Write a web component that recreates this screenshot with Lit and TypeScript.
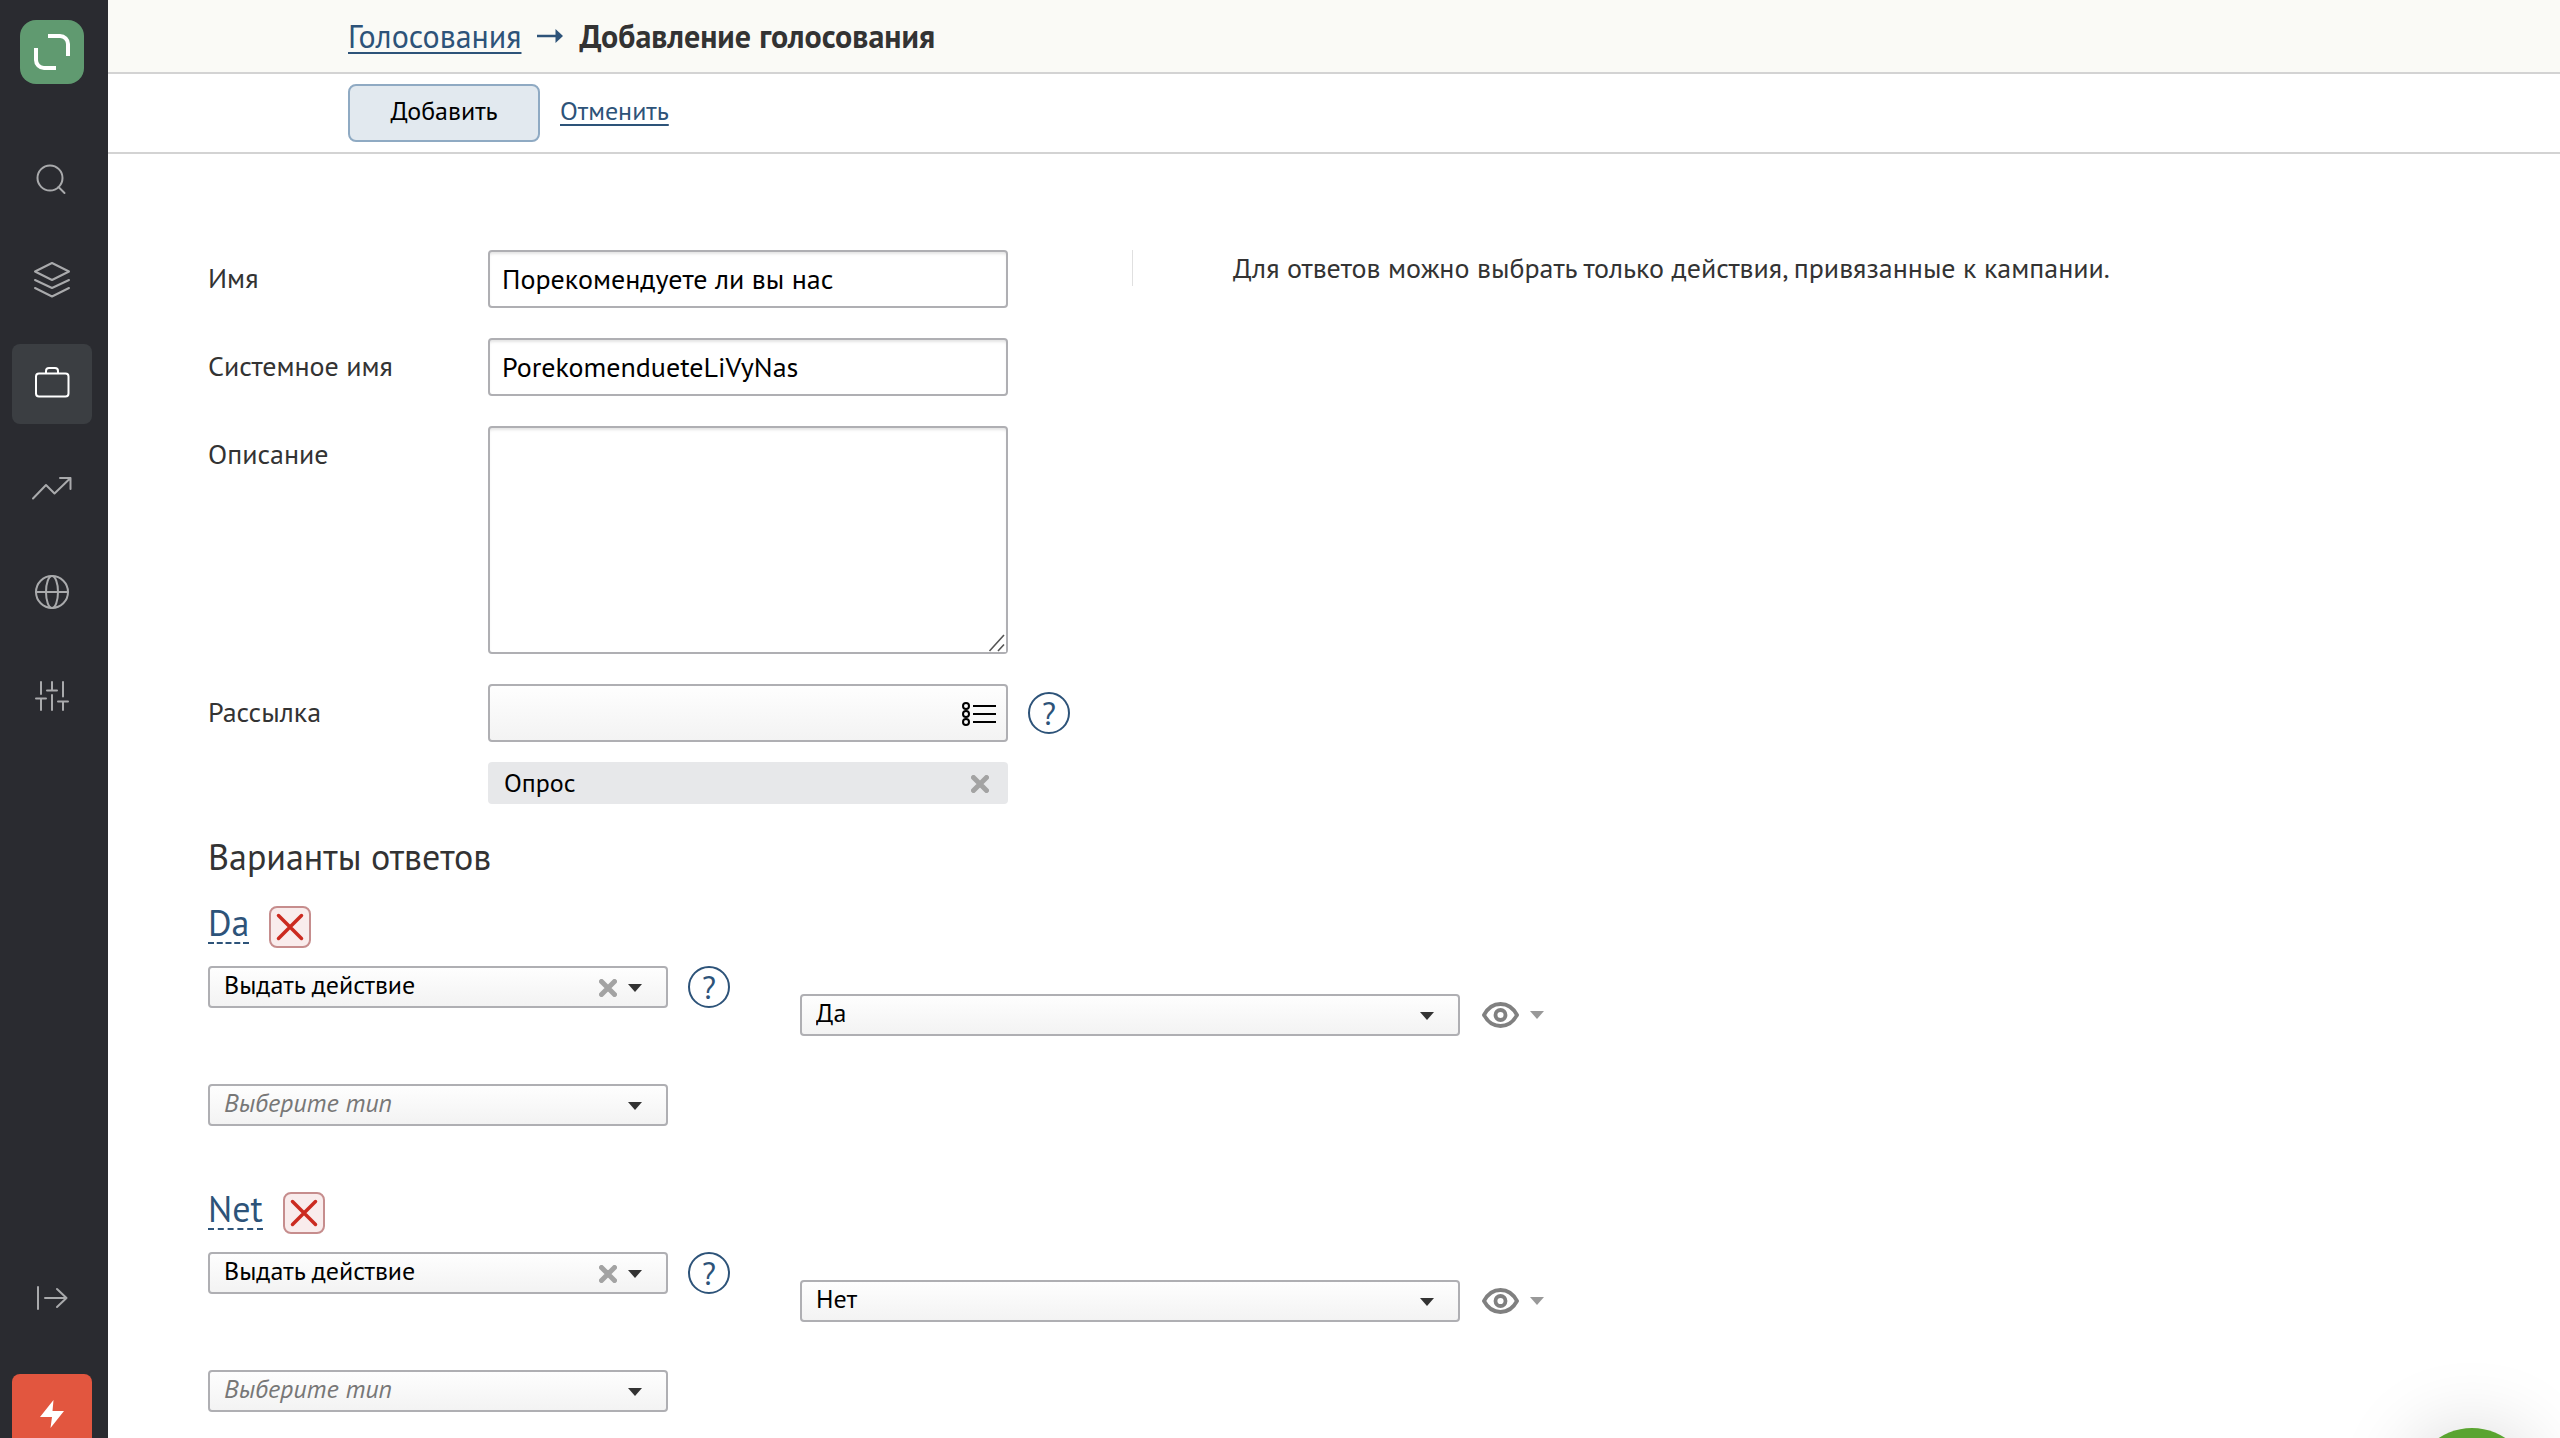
import { LitElement, html, css, svg, nothing } from "lit";
import { customElement, property } from "lit/decorators.js";

const cross = html`<svg class="cross" width="18" height="18" viewBox="0 0 18 18" aria-hidden="true">
  <path d="M2.5 2.5 15.5 15.5M15.5 2.5 2.5 15.5" fill="none" stroke="#a3a3a3" stroke-width="5" stroke-linecap="round" />
</svg>`;

const caret = (color: string) => html`<svg class="caret" width="14" height="8" viewBox="0 0 14 8" aria-hidden="true">
  <path d="M0 0H14L7 8Z" fill=${color} />
</svg>`;

const icons: Record<string, unknown> = {
  search: svg`<circle cx="50" cy="42" r="12.5" /><path d="M58.5 51 64.5 57" />`,
  layers: svg`<path d="M52 23 69 31.500 52 40 35 31.500ZM35 40 52 48 69 40M35 48 52 56.500 69 48" />`,
  bag: svg`<rect x="36" y="29.500" width="32.500" height="23" rx="3" /><path d="M46 29V27a3 3 0 0 1 3-3h6a3 3 0 0 1 3 3v2" />`,
  trend: svg`<path d="M33 50.500 46 37 54.500 45.500 70.500 30M60 30H70.500V41" />`,
  globe: svg`<circle cx="52" cy="40" r="16" /><path d="M36 40H68" /><ellipse cx="52" cy="40" rx="6" ry="16" />`,
  sliders: svg`<path d="M41 26V38M36 42.500H46M41 43V54M52 26V34M47 34.500H57M52 39V54M63 26V40.500M58 45.500H68M63 46V54" />`,
  expand: svg`<path d="M38 29V51M45 40H66.500M57 31 66.500 40 57 49" />`,
};

@customElement("side-button")
class SideButton extends LitElement {
  @property() icon = "search";
  @property() label = "";
  @property({ type: Boolean }) active = false;

  static styles = css`
    :host { display: block; }
    button {
      display: block; width: 80px; height: 80px; padding: 0; border: 0; border-radius: 8px;
      background: transparent; color: #a9aaac; cursor: pointer;
    }
    button.active { background: #3b3e42; color: #fff; }
    svg { display: block; fill: none; stroke: currentColor; stroke-width: 2; stroke-linecap: round; stroke-linejoin: round; }
  `;

  render() {
    return html`<button class=${this.active ? "active" : ""} aria-label=${this.label}>
      <svg width="80" height="80" viewBox="12 0 80 80" aria-hidden="true">${icons[this.icon]}</svg>
    </button>`;
  }
}

@customElement("pick-list")
class PickList extends LitElement {
  @property() value = "";
  @property() label = "";
  @property({ type: Boolean }) clearable = false;
  @property({ type: Boolean }) placeholder = false;

  static styles = css`
    :host { display: block; position: relative; }
    select {
      appearance: none; display: block; box-sizing: border-box; width: 100%; height: 42px; margin: 0;
      padding: 0 100px 4px 14px; border: 2px solid #afafb3; border-radius: 4px;
      background: linear-gradient(#fefefe, #f3f3f3); color: #000; font: 26px/34px var(--font);
    }
    select.placeholder { color: #777; font-style: italic; }
    .tools {
      position: absolute; top: 0; right: 26px; height: 44px; display: flex; align-items: center; gap: 11px;
      pointer-events: none;
    }
    button { display: block; padding: 0; border: 0; background: none; pointer-events: auto; cursor: pointer; }
    svg { display: block; }
  `;

  render() {
    return html`<select class=${this.placeholder ? "placeholder" : ""} aria-label=${this.label}>
        <option>${this.value}</option>
      </select>
      <div class="tools">
        ${this.clearable ? html`<button aria-label="Очистить">${cross}</button>` : nothing}
        ${caret("#333")}
      </div>`;
  }
}

@customElement("help-button")
class HelpButton extends LitElement {
  static styles = css`
    :host { display: block; }
    button {
      display: block; box-sizing: border-box; width: 42px; height: 42px; padding: 0; border: 2px solid #2d5379;
      border-radius: 50%; background: #fff; color: #2d5379; font: 32px/36px var(--font); cursor: pointer;
    }
  `;

  render() {
    return html`<button>?</button>`;
  }
}

@customElement("answer-option")
class AnswerOption extends LitElement {
  @property() name = "";
  @property() action = "";

  static styles = css`
    :host { display: flex; flex-direction: column; }
    .head { display: flex; align-items: center; gap: 20px; height: 42px; }
    .name {
      padding: 0; border: 0; border-bottom: 2px dashed #2d5379; background: none; color: #2d5379;
      font: 36px/38px var(--font); cursor: pointer; margin-bottom: 6px;
    }
    .remove {
      display: block; box-sizing: border-box; width: 42px; height: 42px; padding: 0; border: 2px solid #c68d8d;
      border-radius: 8px; background: #f9ecec; cursor: pointer;
    }
    svg { display: block; }
    .row { display: flex; align-items: flex-start; gap: 20px; margin-top: 18px; }
    .type { width: 460px; }
    .target { display: flex; align-items: center; gap: 22px; margin: 28px 0 0 50px; }
    .action { width: 660px; }
    .preview { display: flex; align-items: center; gap: 11px; padding: 0; border: 0; background: none; cursor: pointer; }
    .next { margin-top: 48px; }
  `;

  render() {
    return html`
      <div class="head">
        <button class="name">${this.name}</button>
        <button class="remove" aria-label="Удалить">
          <svg width="38" height="38" viewBox="0 0 38 38" aria-hidden="true">
            <path d="M7.500 7.500 30.500 30.500M30.500 7.500 7.500 30.500" fill="none" stroke="#cb2b20" stroke-width="3.500" stroke-linecap="round" />
          </svg>
        </button>
      </div>
      <div class="row">
        <pick-list class="type" value="Выдать действие" label="Тип" clearable></pick-list>
        <help-button></help-button>
        <div class="target">
          <pick-list class="action" .value=${this.action} label="Действие"></pick-list>
          <button class="preview" aria-label="Просмотр">
            <svg width="37" height="26" viewBox="0 0 37 26" aria-hidden="true" fill="none" stroke="#808080">
              <path d="M2 13C6 5.500 12 2 18.500 2S31 5.500 35 13C31 20.500 25 24 18.500 24S6 20.500 2 13Z" stroke-width="3.800" />
              <circle cx="18.500" cy="13" r="5" stroke-width="3.800" />
            </svg>
            ${caret("#999")}
          </button>
        </div>
      </div>
      <pick-list class="type next" value="Выберите тип" label="Тип" placeholder></pick-list>
    `;
  }
}

@customElement("app-root")
class AppRoot extends LitElement {
  static styles = css`
    :host {
      --font: "PT Sans", Lato, "Noto Sans", sans-serif;
      display: flex; height: 100vh; overflow: hidden; background: #fff; color: #333; font: 28px/36px var(--font);
    }
    .side {
      box-sizing: border-box; flex: none; width: 108px; padding: 20px 12px 0; background: #2a2b30;
      display: flex; flex-direction: column; overflow: hidden;
    }
    .logo { display: block; width: 64px; height: 64px; margin: 0 8px 52px; border-radius: 16px; background: #609a70; }
    svg { display: block; }
    .menu { display: flex; flex-direction: column; gap: 24px; }
    .bottom { display: flex; flex-direction: column; gap: 36px; margin: auto 0 -16px; }
    .flash { display: block; width: 80px; height: 80px; padding: 0; border: 0; border-radius: 8px; background: #e2563f; cursor: pointer; }
    .main { flex: 1; min-width: 0; overflow: hidden; }
    .crumbs {
      display: flex; align-items: center; gap: 16px; height: 72px; padding-left: 240px;
      border-bottom: 2px solid #d3d3d3; background: #fafaf6; font-size: 32px;
    }
    a { color: #2d5379; text-decoration: underline; text-decoration-thickness: 2px; text-underline-offset: 4px; }
    h1 { margin: 0; font-size: 32px; line-height: 36px; font-weight: 700; }
    .bar {
      display: flex; align-items: center; gap: 20px; height: 78px; padding-left: 240px; border-bottom: 2px solid #d3d3d3;
      font-size: 26px;
    }
    .submit {
      box-sizing: border-box; width: 192px; height: 58px; padding: 0 0 4px; border: 2px solid #8faac3; border-radius: 8px;
      background: #e2e9ef; color: #000; font: 26px/36px var(--font); cursor: pointer;
    }
    .bar a { padding-bottom: 4px; }
    .page { padding: 96px 100px 24px; }
    .top { display: flex; align-items: flex-start; }
    form { display: flex; flex-direction: column; gap: 30px; width: 924px; }
    .field { display: grid; grid-template-columns: 280px 520px auto; column-gap: 0; align-items: start; }
    label { line-height: 56px; }
    .text {
      box-sizing: border-box; display: block; width: 100%; height: 58px; margin: 0; padding: 0 12px 2px;
      border: 2px solid #afafb3; border-radius: 4px; background: #fff; box-shadow: inset 0 3px 3px -1px #e4e4e4;
      color: #000; font: 28px/36px var(--font);
    }
    .area { position: relative; }
    .area .text { height: 228px; }
    .grip { position: absolute; right: 2px; bottom: 2px; background: #fff; pointer-events: none; }
    .picker { position: relative; }
    .picker .text { background: linear-gradient(#fefefe, #f3f3f3); box-shadow: none; padding-right: 60px; }
    .list { position: absolute; right: 12px; top: 17px; padding: 0; border: 0; background: none; cursor: pointer; }
    help-button { margin: 8px 0 0 20px; }
    .tag {
      box-sizing: border-box; display: flex; justify-content: space-between; align-items: center; height: 42px; margin-top: 20px;
      padding: 0 19px 0 16px; border-radius: 4px; background: #e7e8ea; color: #000; font-size: 26px;
    }
    .tag button { padding: 2px 0 0; border: 0; background: none; cursor: pointer; }
    .hint { flex: 1; margin: 0; padding-left: 100px; border-left: 1px solid #e0e0e0; }
    h2 { margin: 29px 0 25px; font-size: 36px; line-height: 48px; font-weight: 400; }
    .answers { display: flex; flex-direction: column; gap: 66px; }
    .chat {
      position: fixed; right: 28px; bottom: -110px; width: 120px; height: 120px; padding: 0; border: 0; border-radius: 50%;
      background: #5aa430; box-shadow: 0 4px 80px rgba(0, 0, 0, 0.18); cursor: pointer;
    }
  `;

  render() {
    return html`
      <nav class="side">
        <a class="logo" href="#" aria-label="Главная">
          <svg width="64" height="64" viewBox="0 0 64 64" fill="none" stroke="#fff" stroke-width="4" aria-hidden="true">
            <path d="M28 16H40A8 8 0 0 1 48 24V36M16 28V40A8 8 0 0 0 24 48H36" />
          </svg>
        </a>
        <div class="menu">
          <side-button icon="search" label="Поиск"></side-button>
          <side-button icon="layers" label="Данные"></side-button>
          <side-button icon="bag" label="Кампании" active></side-button>
          <side-button icon="trend" label="Отчёты"></side-button>
          <side-button icon="globe" label="Сайт"></side-button>
          <side-button icon="sliders" label="Настройки"></side-button>
        </div>
        <div class="bottom">
          <side-button icon="expand" label="Развернуть"></side-button>
          <button class="flash" aria-label="Быстрые действия">
            <svg width="80" height="80" viewBox="0 0 80 80" aria-hidden="true"><path d="M41.500 26 28 43H40L38.500 54 52 37H40.500Z" fill="#fff" /></svg>
          </button>
        </div>
      </nav>
      <main class="main">
        <header class="crumbs">
          <a href="#">Голосования</a>
          <svg width="26" height="14" viewBox="0 0 26 14" aria-hidden="true">
            <path d="M0 7H20" stroke="#2d5379" stroke-width="2.500" /><path d="M18.500 0 26 7 18.500 14Z" fill="#2d5379" />
          </svg>
          <h1>Добавление голосования</h1>
        </header>
        <div class="bar">
          <button class="submit" type="submit" form="poll">Добавить</button>
          <a href="#">Отменить</a>
        </div>
        <div class="page">
          <div class="top">
            <form id="poll">
              <div class="field">
                <label for="name">Имя</label>
                <input class="text" id="name" type="text" value="Порекомендуете ли вы нас" />
              </div>
              <div class="field">
                <label for="system">Системное имя</label>
                <input class="text" id="system" type="text" value="PorekomendueteLiVyNas" />
              </div>
              <div class="field">
                <label for="about">Описание</label>
                <div class="area">
                  <textarea class="text" id="about"></textarea>
                  <svg class="grip" width="18" height="18" viewBox="0 0 18 18" aria-hidden="true">
                    <path d="M1.500 17 16 1M10 17 16 10.500" fill="none" stroke="#555" stroke-width="1.600" />
                  </svg>
                </div>
              </div>
              <div class="field">
                <label for="mailing">Рассылка</label>
                <div>
                  <div class="picker">
                    <input class="text" id="mailing" type="text" />
                    <button class="list" type="button" aria-label="Выбрать из списка">
                      <svg width="34" height="26" viewBox="0 0 34 26" fill="none" stroke="#000" stroke-width="2" aria-hidden="true">
                        <circle cx="4" cy="5" r="3" /><circle cx="4" cy="13" r="3" /><circle cx="4" cy="21" r="3" />
                        <path d="M11 5H34M11 13H34M11 21H34" />
                      </svg>
                    </button>
                  </div>
                  <div class="tag">Опрос<button type="button" aria-label="Убрать">${cross}</button></div>
                </div>
                <help-button></help-button>
              </div>
            </form>
            <p class="hint">Для ответов можно выбрать только действия, привязанные к кампании.</p>
          </div>
          <h2>Варианты ответов</h2>
          <div class="answers">
            <answer-option name="Da" action="Да"></answer-option>
            <answer-option name="Net" action="Нет"></answer-option>
          </div>
        </div>
      </main>
      <button class="chat" aria-label="Чат"></button>
    `;
  }
}
